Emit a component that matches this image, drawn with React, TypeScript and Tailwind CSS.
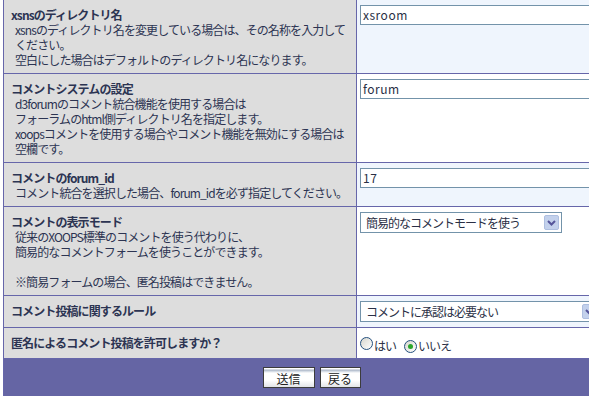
import React from 'react';

const FONT = { fontFamily: '"Noto Sans CJK JP", "Noto Sans", sans-serif' };

type Row = {
  title: string;
  lines: string[];
  shade: boolean;
  value: React.ReactNode;
};

function TextInput({ value }: { value: string }) {
  return (
    <div className="w-[250px] h-[20px] border border-[#7393aa] bg-white pl-[2px] text-[12px] leading-[18px] text-[#2a2f45] tracking-[0.5px]">
      {value}
    </div>
  );
}

function Chevron() {
  return (
    <span className="w-[15px] h-[15px] rounded-[2px] bg-[#c3d1ec] border border-[#aebfe0] flex items-center justify-center">
      <svg width="9" height="6" viewBox="0 0 9 6">
        <path d="M1 1 L4.5 4.5 L8 1" fill="none" stroke="#55559a" strokeWidth="2" />
      </svg>
    </span>
  );
}

function Select({ label, width }: { label: string; width: string }) {
  return (
    <div className={`${width} h-[21px] border border-[#7393aa] bg-white flex items-center justify-between pl-[5px] pr-[2px]`}>
      <span className="text-[12px] leading-[19px] text-[#2a2f45] tracking-[-1px] whitespace-nowrap">{label}</span>
      <Chevron />
    </div>
  );
}

function Radio({ checked }: { checked?: boolean }) {
  return (
    <span className="inline-flex w-[13px] h-[13px] rounded-full border border-[#24507e] bg-[linear-gradient(135deg,#d6d6ce,#ffffff)] items-center justify-center align-[-2px]">
      {checked && <span className="w-[5px] h-[5px] rounded-full bg-[#2aa52a]" />}
    </span>
  );
}

const rows: Row[] = [
  {
    title: 'xsnsのディレクトリ名',
    lines: [
      'xsnsのディレクトリ名を変更している場合は、その名称を入力して',
      'ください。',
      '空白にした場合はデフォルトのディレクトリ名になります。',
    ],
    shade: true,
    value: <TextInput value="xsroom" />,
  },
  {
    title: 'コメントシステムの設定',
    lines: [
      'd3forumのコメント統合機能を使用する場合は',
      'フォーラムのhtml側ディレクトリ名を指定します。',
      'xoopsコメントを使用する場合やコメント機能を無効にする場合は',
      '空欄です。',
    ],
    shade: false,
    value: <TextInput value="forum" />,
  },
  {
    title: 'コメントのforum_id',
    lines: ['コメント統合を選択した場合、forum_idを必ず指定してください。'],
    shade: true,
    value: <TextInput value="17" />,
  },
  {
    title: 'コメントの表示モード',
    lines: [
      '従来のXOOPS標準のコメントを使う代わりに、',
      '簡易的なコメントフォームを使うことができます。',
      '',
      '※簡易フォームの場合、匿名投稿はできません。',
    ],
    shade: false,
    value: <Select label="簡易的なコメントモードを使う" width="w-[202px]" />,
  },
  {
    title: 'コメント投稿に関するルール',
    lines: [],
    shade: true,
    value: <Select label="コメントに承認は必要ない" width="w-[240px]" />,
  },
  {
    title: '匿名によるコメント投稿を許可しますか？',
    lines: [],
    shade: false,
    value: (
      <div className="flex items-center pt-[1px] text-[12px] leading-[15px] text-[#2a2f45] tracking-[-1px]">
        <Radio />
        <span className="ml-[1px] mt-[4px]">はい</span>
        <span className="ml-[8px]"><Radio checked /></span>
        <span className="ml-[1px] mt-[4px]">いいえ</span>
      </div>
    ),
  },
];

function Button({ label, width }: { label: string; width: string }) {
  return (
    <button
      className={`${width} h-[21px] border border-[#3c3c3c] text-[12px] leading-[19px] text-[#222] bg-[linear-gradient(#ffffff_0px,#ffffff_1px,#a9b3c4_2px,#c9d2de_3px,#ffffff_5px,#ffffff_65%,#e2e4e8_100%)] pt-[1px]`}
    >
      {label}
    </button>
  );
}

export default function App() {
  return (
    <div className="w-[589px] h-[396px] overflow-hidden bg-white" style={FONT}>
      <div className="ml-[3px] w-[616px] border-l border-[#6666aa]">
        {rows.map((r, i) => (
          <div key={i} className="flex border-b border-[#6666aa]">
            <div className="w-[353px] shrink-0 bg-[#dddddd] border-r border-[#6666aa] pl-[7px] pt-[7px] pb-[6px] text-[12px] leading-[15px] text-[#2c3452] tracking-[-0.9px] whitespace-nowrap">
              <div className="font-bold">{r.title}</div>
              {r.lines.map((l, j) => (
                <div key={j} className="pl-[4px] h-[15px]">{l}</div>
              ))}
            </div>
            <div className={`flex-1 pl-[3px] pt-[5px] pb-[5px] ${r.shade ? 'bg-[#eff5fd]' : 'bg-white'}`}>
              {r.value}
            </div>
          </div>
        ))}
        <div className="h-[40px] bg-[#6565a4] flex justify-center gap-[5px] pt-[8px]">
          <Button label="送信" width="w-[52px]" />
          <Button label="戻る" width="w-[41px]" />
        </div>
      </div>
    </div>
  );
}
